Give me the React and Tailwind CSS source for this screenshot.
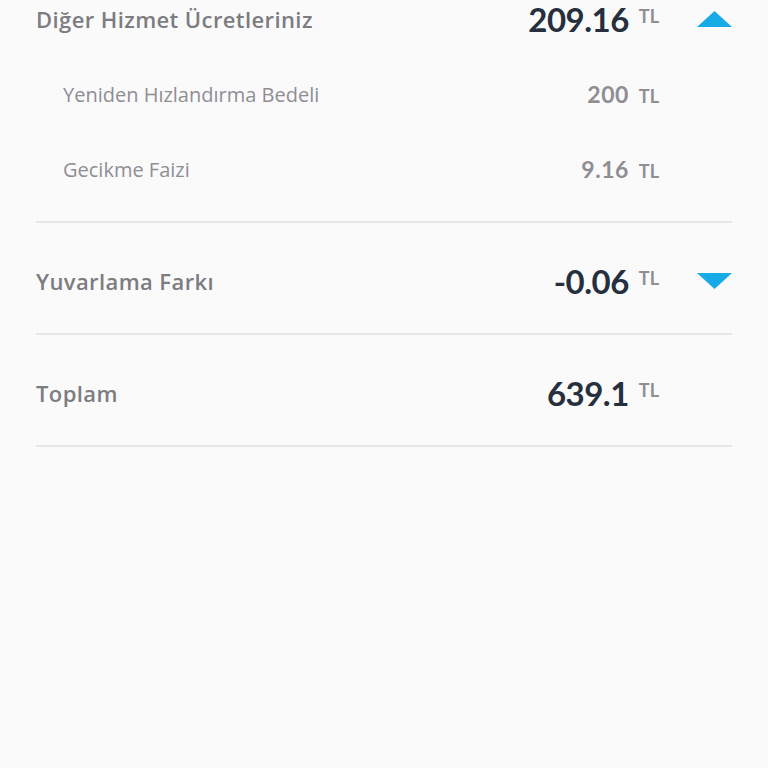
import React from "react";

function Triangle({ up }) {
  return (
    <svg width="35" height="16" viewBox="0 0 35 16" className="block">
      {up ? <polygon points="17.5,0 35,16 0,16" fill="#16aae6" /> : <polygon points="0,0 35,0 17.5,16" fill="#16aae6" />}
    </svg>
  );
}

function Amount({ value, big }) {
  if (big) {
    return (
      <div className="flex items-start">
        <span className="text-[33px] leading-[38px] font-bold text-[#262f3d] tracking-[-0.5px]">{value}</span>
        <span className="ml-[10px] mt-[6px] text-[18px] leading-[20px] font-bold text-[#8e8e93]">TL</span>
      </div>
    );
  }
  return (
    <div className="flex items-baseline">
      <span className="text-[23px] font-bold text-[#8e8e93] tracking-[0.5px]">{value}</span>
      <span className="ml-[10px] text-[18px] font-bold text-[#8e8e93]">TL</span>
    </div>
  );
}

function MainRow({ label, value, arrow, className }) {
  return (
    <div className={`flex items-center ${className}`}>
      <div className="flex-1 text-[22px] tracking-[0.4px] font-semibold text-[#7c7c81] font-['Open_Sans',sans-serif]">{label}</div>
      <Amount value={value} big />
      <div className="w-[73px] flex justify-end">{arrow && <Triangle up={arrow === "up"} />}</div>
    </div>
  );
}

function SubRow({ label, value }) {
  return (
    <div className="flex items-center h-[75px] pl-[27px]">
      <div className="flex-1 text-[20px] text-[#8e8e93] font-['Open_Sans',sans-serif]">{label}</div>
      <Amount value={value} />
      <div className="w-[73px]" />
    </div>
  );
}

export default function App() {
  return (
    <div className="w-[768px] h-[768px] bg-[#fafafb] px-[36px] overflow-hidden font-['Lato','Noto_Sans',sans-serif]">
      <div className="border-b-2 border-[#e6e6e8] pb-[14px]">
        <MainRow label="Diğer Hizmet Ücretleriniz" value="209.16" arrow="up" className="h-[38px]" />
        <div className="mt-[19px]">
          <SubRow label="Yeniden Hızlandırma Bedeli" value="200" />
          <SubRow label="Gecikme Faizi" value="9.16" />
        </div>
      </div>
      <div className="border-b-2 border-[#e6e6e8]">
        <MainRow label="Yuvarlama Farkı" value="-0.06" arrow="down" className="h-[110px] pt-[6px]" />
      </div>
      <div className="border-b-2 border-[#e6e6e8]">
        <MainRow label="Toplam" value="639.1" className="h-[110px] pt-[6px]" />
      </div>
    </div>
  );
}
